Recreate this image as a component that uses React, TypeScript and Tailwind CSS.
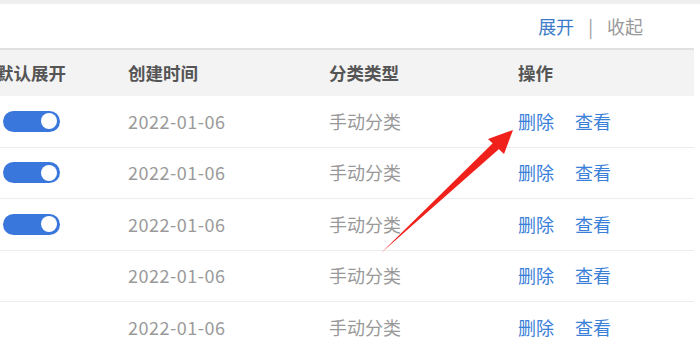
import React from 'react'

const rows = [
  { on: true },
  { on: true },
  { on: true },
  { on: false },
  { on: false },
]

const font = { fontFamily: '"Noto Sans CJK SC", "Noto Sans", sans-serif' }

function Toggle() {
  return (
    <div className="ml-[3px] flex h-[21px] w-[57px] items-center justify-end rounded-full bg-[#3a77dc] pr-[3px]">
      <div className="h-[16px] w-[16px] rounded-full bg-white" />
    </div>
  )
}

export default function App() {
  return (
    <div className="relative h-[349px] w-[700px] overflow-hidden bg-white" style={font}>
      <div className="h-[4px] bg-[#efefef]" />

      {/* toolbar */}
      <div className="flex h-[44px] items-center justify-end pr-[57px] text-[18px]">
        <span className="text-[#3b7cc9]">展开</span>
        <span className="mx-[14px] text-[#999]">|</span>
        <span className="text-[#9a9a9a]">收起</span>
      </div>

      {/* table */}
      <div className="w-[694px]">
        <div className="grid h-[48px] grid-cols-[128px_201px_189px_176px] items-center border-t-2 border-[#e0e0e0] bg-[#f3f3f3] text-[17.5px] font-bold text-[#555]">
          <div className="-ml-[4px]">默认展开</div>
          <div>创建时间</div>
          <div>分类类型</div>
          <div>操作</div>
        </div>
        {rows.map((r, i) => (
          <div
            key={i}
            className="grid h-[51.5px] grid-cols-[128px_201px_189px_176px] items-center border-b border-[#ececec] text-[18px]"
          >
            <div>{r.on && <Toggle />}</div>
            <div className="tracking-[0.5px] text-[#9a9a9a]">2022-01-06</div>
            <div className="text-[#999]">手动分类</div>
            <div className="flex gap-[21px] text-[#3a80d8]">
              <span>删除</span>
              <span>查看</span>
            </div>
          </div>
        ))}
      </div>

      {/* red annotation arrow */}
      <svg className="pointer-events-none absolute left-0 top-0" width="700" height="349" viewBox="0 0 700 349">
        <polygon points="381,253 499,149 494,142 382,252" fill="#f0201a" />
        <polygon points="513,130 488,139 504,154" fill="#f0201a" />
      </svg>
    </div>
  )
}
